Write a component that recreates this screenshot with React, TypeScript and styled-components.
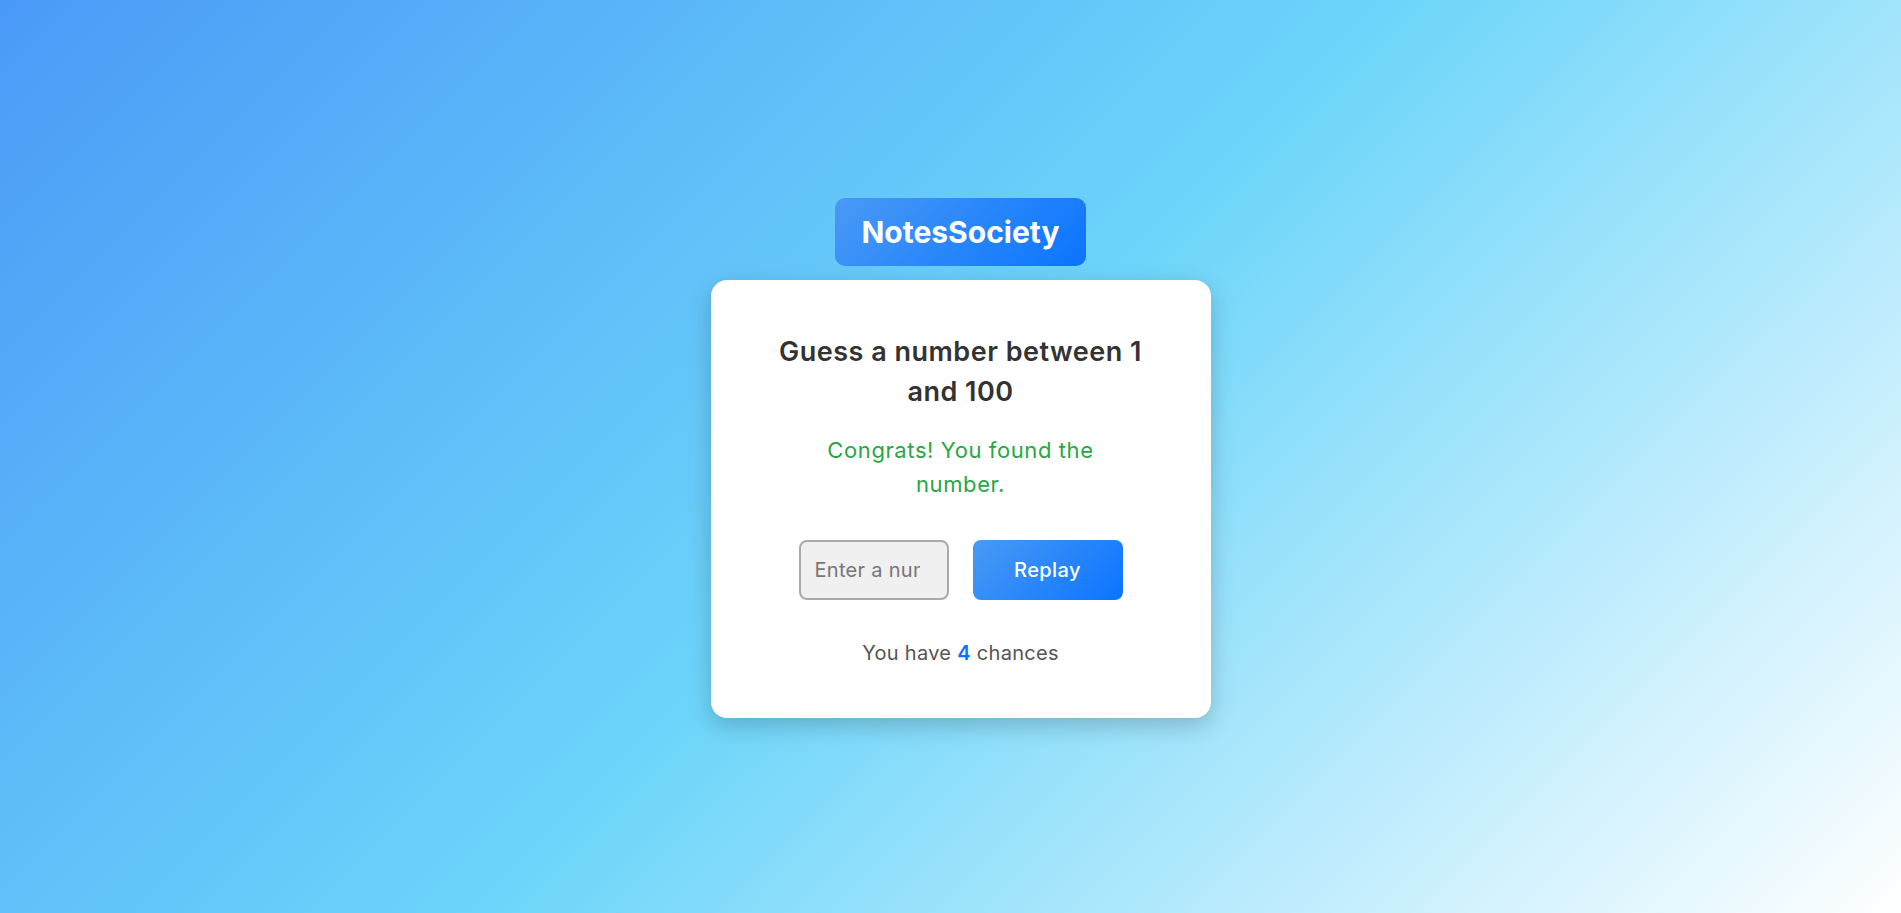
import React, { useState } from "react";
import styled, { createGlobalStyle } from "styled-components";

const GlobalStyle = createGlobalStyle`
  * {
    box-sizing: border-box;
  }
  html, body {
    margin: 0;
    padding: 0;
  }
  body {
    font-family: "Inter", "Open Sans", sans-serif;
    background: linear-gradient(135deg, #4a9af7 0%, #6dd5fa 50%, #ffffff 100%);
    min-height: 100vh;
  }
`;

const Page = styled.main`
  min-height: 100vh;
  padding: 2px 0 0 20px;
  display: flex;
  flex-direction: column;
  align-items: center;
  justify-content: center;
  gap: 14px;
`;

const Brand = styled.div`
  height: 68px;
  padding: 0 26px;
  display: flex;
  align-items: center;
  border-radius: 10px;
  background: linear-gradient(135deg, #4a9af5, #0a74ff);
  color: #fff;
  font-size: 30px;
  font-weight: 700;
`;

const Card = styled.section`
  width: 500px;
  padding: 52px 40px 50px;
  background: #fff;
  border-radius: 16px;
  box-shadow: 0 8px 24px rgba(0, 0, 0, 0.2);
  display: flex;
  flex-direction: column;
  align-items: center;
  text-align: center;
`;

const Title = styled.h2`
  margin: 0;
  max-width: 395px;
  font-size: 27px;
  line-height: 40px;
  letter-spacing: 0.5px;
  font-weight: 600;
  color: #333;
`;

const Message = styled.p<{ $tone: "win" | "lose" }>`
  margin: 21px 0 0;
  max-width: 300px;
  font-size: 22px;
  line-height: 34px;
  letter-spacing: 0.6px;
  color: ${(p) => (p.$tone === "win" ? "#28a745" : "#dc3545")};
`;

const Controls = styled.div`
  margin-top: 39px;
  display: flex;
  gap: 24px;
`;

const NumberInput = styled.input`
  width: 150px;
  height: 60px;
  padding: 0 12px 0 14px;
  border: 2px solid #aaa;
  border-radius: 8px;
  background: #f0f0f0;
  font-family: inherit;
  font-size: 20px;
  letter-spacing: 0.3px;
  color: #333;
  outline: none;
  &::placeholder {
    color: #777;
  }
`;

const ActionButton = styled.button`
  width: 150px;
  height: 60px;
  border: none;
  border-radius: 8px;
  background: linear-gradient(135deg, #4a9af5, #0a74ff);
  color: #fff;
  font-family: inherit;
  font-size: 20px;
  letter-spacing: 0.4px;
  font-weight: 500;
  cursor: pointer;
`;

const Chances = styled.p`
  margin: 38px 0 0;
  font-size: 20px;
  line-height: 30px;
  letter-spacing: 0.3px;
  color: #555;
  strong {
    color: #0a74ff;
    font-weight: 600;
  }
`;

export default function App() {
  const [guess, setGuess] = useState("");
  const chances = 4;

  return (
    <>
      <GlobalStyle />
      <Page>
        <Brand>NotesSociety</Brand>
        <Card>
          <Title>Guess a number between 1 and 100</Title>
          <Message $tone="win">Congrats! You found the number.</Message>
          <Controls>
            <NumberInput
              type="number"
              placeholder="Enter a number"
              value={guess}
              onChange={(e) => setGuess(e.target.value)}
            />
            <ActionButton>Replay</ActionButton>
          </Controls>
          <Chances>
            You have <strong>{chances}</strong> chances
          </Chances>
        </Card>
      </Page>
    </>
  );
}
